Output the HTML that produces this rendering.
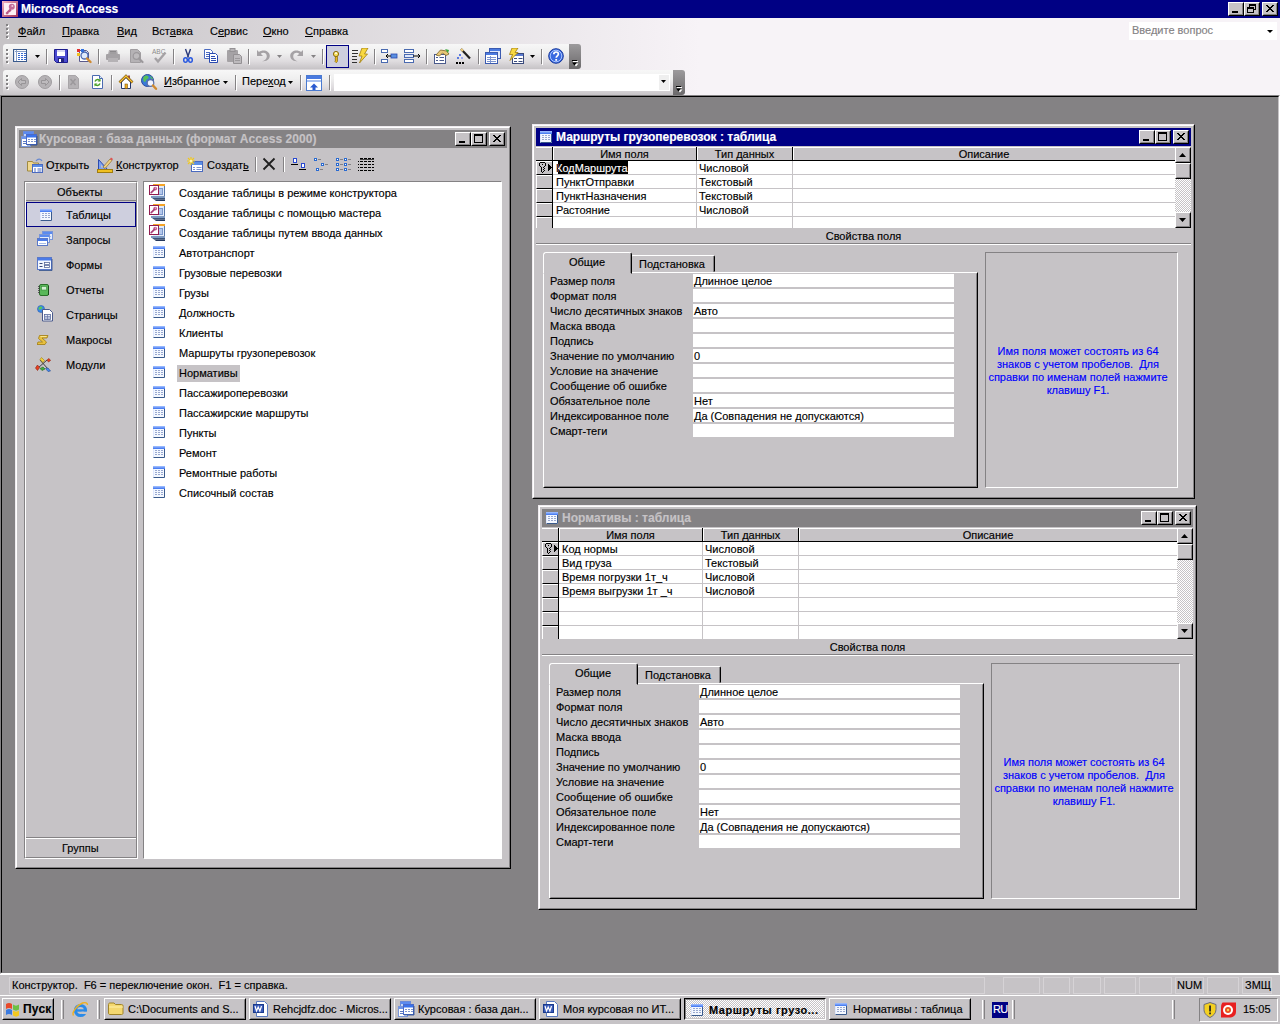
<!DOCTYPE html>
<html lang="ru"><head><meta charset="utf-8"><title>Microsoft Access</title>
<style>
*{box-sizing:border-box;margin:0;padding:0}
html,body{width:1280px;height:1024px;overflow:hidden;background:#848284}
body{position:relative;font-family:"Liberation Sans",sans-serif;font-size:11px;color:#000;line-height:13px;-webkit-font-smoothing:none;-webkit-text-stroke:.15px}
.a{position:absolute}
.t{position:absolute;white-space:nowrap}
u{text-decoration:underline;text-underline-offset:1px}
.win{position:absolute;background:#C6C3C6;border:1px solid;border-color:#EFEBEF #000 #000 #EFEBEF}
.win>.in{position:absolute;left:0;top:0;right:0;bottom:0;border:1px solid;border-color:#fff #848284 #848284 #fff}
.tb{position:absolute;left:3px;top:3px;right:3px;height:18px;color:#fff;font-weight:bold}
.cb{position:absolute;top:2px;width:16px;height:14px;background:#C6C3C6;border:1px solid;border-color:#fff #000 #000 #fff}
.cb:after{content:"";position:absolute;left:0;top:0;right:0;bottom:0;border:1px solid;border-color:#C6C3C6 #848284 #848284 #C6C3C6}
.sunk{border:1px solid;border-color:#848284 #fff #fff #848284}
.btn{position:absolute;background:#C6C3C6;border:1px solid;border-color:#fff #000 #000 #fff}
.btn:after{content:"";position:absolute;left:0;top:0;right:0;bottom:0;border:1px solid;border-color:#C6C3C6 #848284 #848284 #C6C3C6}
.g{font-size:11px}
</style></head>
<body>
<div class="a" style="left:0;top:0;width:1280px;height:18px;background:#000084"></div>
<svg class="a" style="left:2px;top:1px" width="16" height="16" viewBox="0 0 16 16"><defs><linearGradient id="ag" x1="0" y1="0" x2="1" y2="1"><stop offset="0" stop-color="#f4b8c4"/><stop offset="1" stop-color="#a02c54"/></linearGradient></defs><rect x="0" y="0" width="16" height="16" fill="url(#ag)"/><rect x="2" y="2" width="12" height="12" fill="#fcf0f5"/><circle cx="9.800" cy="5.800" r="3" fill="#c46a98"/><circle cx="10.300" cy="5" r="1" fill="#f0c8dc"/><path d="M8 7.500L3.500 12l1.200 1.500l1.600-.6l.4-1.400l1.400-.4l1.500-1.800z" fill="#b85888"/></svg>
<div class="t" id="apptitle" style="left:21px;top:2px;letter-spacing:-.12px;color:#fff;font-weight:bold;font-size:12px;line-height:14px">Microsoft Access</div>
<div class="a" style="left:1228px;top:2px;width:50px;height:14px"><div class="cb" style="left:0;top:0"><svg class="a" style="left:0;top:0" width="14" height="12"><rect x="3" y="8" width="6" height="2" fill="#000"/></svg></div><div class="cb" style="left:16px;top:0"><svg class="a" style="left:0;top:0" width="14" height="12"><rect x="4.5" y="1.5" width="6" height="5" fill="none" stroke="#000"/><rect x="4" y="1" width="7" height="2" fill="#000"/><rect x="2.5" y="4.5" width="6" height="5" fill="#C6C3C6" stroke="#000"/><rect x="2" y="4" width="7" height="2" fill="#000"/></svg></div><div class="cb" style="left:34px;top:0"><svg class="a" style="left:0;top:0" width="14" height="12"><path transform="translate(3 2)" d="M0 0h2v1h1v1h2v-1h1v-1h2v1h-1v1h-1v1h-1v1h1v1h1v1h1v1h-2v-1h-1v-1h-2v1h-1v1h-2v-1h1v-1h1v-1h1v-1h-1v-1h-1v-1h-1z" fill="#000"/></svg></div></div>
<div class="a" style="left:0;top:18px;width:1280px;height:78px;background:linear-gradient(to right,#C6C3C6 0,#C6C3C6 28px,#F7F3F7 700px)"></div>
<div class="a" style="left:7px;top:25px;width:2px;height:2px;background:#fff"></div><div class="a" style="left:6px;top:24px;width:2px;height:2px;background:#848284"></div><div class="a" style="left:7px;top:29px;width:2px;height:2px;background:#fff"></div><div class="a" style="left:6px;top:28px;width:2px;height:2px;background:#848284"></div><div class="a" style="left:7px;top:33px;width:2px;height:2px;background:#fff"></div><div class="a" style="left:6px;top:32px;width:2px;height:2px;background:#848284"></div><div class="a" style="left:7px;top:37px;width:2px;height:2px;background:#fff"></div><div class="a" style="left:6px;top:36px;width:2px;height:2px;background:#848284"></div>
<div class="t" id="m0" style="left:18px;top:25px"><u>Ф</u>айл</div>
<div class="t" id="m1" style="left:62px;top:25px"><u>П</u>равка</div>
<div class="t" id="m2" style="left:117px;top:25px"><u>В</u>ид</div>
<div class="t" id="m3" style="left:152px;top:25px">Вст<u>а</u>вка</div>
<div class="t" id="m4" style="left:210px;top:25px">С<u>е</u>рвис</div>
<div class="t" id="m5" style="left:263px;top:25px"><u>О</u>кно</div>
<div class="t" id="m6" style="left:305px;top:25px"><u>С</u>правка</div>
<div class="a" style="left:1129px;top:22px;width:148px;height:18px;background:#fff"></div>
<div class="t" id="ask" style="left:1132px;top:24px;color:#848284">Введите вопрос</div>
<div class="a" style="left:1267px;top:30px;width:0;height:0;border:3px solid transparent;border-top:3px solid #000;border-bottom:0"></div>
<div class="a" style="left:3px;top:44px;width:568px;height:25px;background:linear-gradient(to bottom,#F7F7F7 0,#EFEFEF 35%,#DEDBDE 70%,#C6C3C6 100%);border-radius:3px 0 0 3px"></div><div class="a" style="left:569px;top:44px;width:12px;height:25px;background:linear-gradient(to bottom,#9C9A9C 0,#848284 50%,#6B696B 100%);border-radius:0 3px 3px 0"></div><svg class="a" style="left:572px;top:60px" width="7" height="7"><path d="M1 1h5M1.500 3.500h5l-2.500 3z" stroke="none" fill="#fff"/><rect x="1" y="1" width="5" height="1" fill="#fff"/><rect x="0" y="0" width="5" height="1" fill="#000"/><path d="M0 2.500h5l-2.500 3z" fill="#000"/></svg><div class="a" style="left:7px;top:50px;width:2px;height:2px;background:#fff"></div><div class="a" style="left:6px;top:49px;width:2px;height:2px;background:#848284"></div><div class="a" style="left:7px;top:54px;width:2px;height:2px;background:#fff"></div><div class="a" style="left:6px;top:53px;width:2px;height:2px;background:#848284"></div><div class="a" style="left:7px;top:58px;width:2px;height:2px;background:#fff"></div><div class="a" style="left:6px;top:57px;width:2px;height:2px;background:#848284"></div><div class="a" style="left:7px;top:62px;width:2px;height:2px;background:#fff"></div><div class="a" style="left:6px;top:61px;width:2px;height:2px;background:#848284"></div>
<div class="a" style="left:13px;top:49px;line-height:0"><svg width="14" height="13" viewBox="0 0 14 13"><rect x="0.500" y="0.500" width="13" height="12" fill="#fff" stroke="#3a5a8c"/><path d="M1 2.500h12M3.500 1v11" stroke="#8aa0c8" fill="none"/><path d="M5 4.500h2M8 4.500h2M11 4.500h2M5 6.500h2M8 6.500h2M11 6.500h2M5 8.500h2M8 8.500h2M11 8.500h2M5 10.500h2M8 10.500h2M11 10.500h2" stroke="#3a6ad0"/><path d="M1.500 1v11" stroke="#dfe6f4"/></svg></div>
<svg class="a" style="left:35px;top:55px" width="5" height="3"><path d="M0 0h5l-2.500 3z" fill="#000"/></svg>
<div class="a" style="left:46px;top:49px;width:1px;height:15px;background:#848284"></div><div class="a" style="left:47px;top:50px;width:1px;height:15px;background:#fff"></div>
<div class="a" style="left:53px;top:48px;line-height:0"><svg width="16" height="16" viewBox="0 0 16 16"><path d="M1.5 1.5h13v13h-11l-2-2z" fill="#4a4ad0" stroke="#1c1c8c"/><rect x="4" y="2" width="8" height="6" fill="#fff"/><rect x="4" y="2" width="8" height="2" fill="#d8d8f4"/><rect x="5" y="10" width="6" height="4" fill="#24247c"/><rect x="6" y="11" width="2" height="3" fill="#fff"/></svg></div>
<div class="a" style="left:76px;top:48px;line-height:0"><svg width="16" height="16" viewBox="0 0 16 16"><path d="M3.5 2.5h7l2 2v9h-9z" fill="#fff" stroke="#5a5a8c"/><rect x="1" y="1" width="3" height="3" fill="#e03030"/><rect x="5" y="1" width="3" height="3" fill="#3070e0"/><rect x="1" y="5" width="3" height="3" fill="#f0c020"/><circle cx="8.5" cy="7.5" r="3.5" fill="#dfeafc" stroke="#4a68b0" stroke-width="1.3"/><path d="M11 10.5l3.5 3.5" stroke="#d08a30" stroke-width="2.4" stroke-linecap="round"/></svg></div>
<div class="a" style="left:98px;top:49px;width:1px;height:15px;background:#848284"></div><div class="a" style="left:99px;top:50px;width:1px;height:15px;background:#fff"></div>
<div class="a" style="left:105px;top:48px;line-height:0"><svg width="16" height="16" viewBox="0 0 16 16"><path d="M4 2h8l1 4h-10z" fill="#b5b2b5"/><rect x="1" y="6" width="14" height="6" rx="1" fill="#a5a2a5"/><rect x="3" y="10" width="10" height="4" fill="#b5b2b5"/><path d="M5 3.5h6M4.500 5h7" stroke="#8c8a8c"/></svg></div>
<div class="a" style="left:128px;top:48px;line-height:0"><svg width="16" height="16" viewBox="0 0 16 16"><path d="M2.5 1.500h7l3 3v10h-10z" fill="#b5b2b5" stroke="#a09da0"/><circle cx="8.5" cy="8" r="3.3" fill="#bdbabd" stroke="#9c999c" stroke-width="1.2"/><path d="M11 10.500l3.500 3.500" stroke="#9c999c" stroke-width="2.2" stroke-linecap="round"/></svg></div>
<div class="a" style="left:151px;top:48px;line-height:0"><svg width="16" height="16" viewBox="0 0 16 16"><text x="1" y="6" font-family="Liberation Sans,sans-serif" font-size="6.5" fill="#8c8a8c">ABC</text><path d="M4 10l3 3.500l7.500 -9" stroke="#a5a2a5" stroke-width="2.4" fill="none"/></svg></div>
<div class="a" style="left:173px;top:49px;width:1px;height:15px;background:#848284"></div><div class="a" style="left:174px;top:50px;width:1px;height:15px;background:#fff"></div>
<div class="a" style="left:180px;top:48px;line-height:0"><svg width="16" height="16" viewBox="0 0 16 16"><path d="M5.500 1l3 8.500M10.500 1l-3 8.500" stroke="#2a3a7c" stroke-width="1.400" fill="none"/><ellipse cx="5.500" cy="12" rx="1.800" ry="2.300" fill="none" stroke="#2a5ae0" stroke-width="1.500"/><ellipse cx="10.500" cy="12" rx="1.800" ry="2.300" fill="none" stroke="#2a5ae0" stroke-width="1.500"/></svg></div>
<div class="a" style="left:203px;top:48px;line-height:0"><svg width="16" height="16" viewBox="0 0 16 16"><path d="M1.500 1.500h6l2 2v7h-8z" fill="#fff" stroke="#4a6ac0"/><path d="M3 4.500h4M3 6.500h5M3 8.500h5" stroke="#4a6ac0"/><path d="M6.500 5.500h6l2 2v7h-8z" fill="#fff" stroke="#2a4ab0"/><path d="M8 8.500h4M8 10.500h5M8 12.500h5" stroke="#2a4ab0"/></svg></div>
<div class="a" style="left:226px;top:48px;line-height:0"><svg width="16" height="16" viewBox="0 0 16 16"><rect x="1" y="2" width="11" height="12" rx="1" fill="#a5a2a5"/><rect x="4" y="0.500" width="5" height="3" fill="#b5b2b5" stroke="#949194"/><path d="M7.500 6.500h6l2 2v7h-8z" fill="#bdbabd" stroke="#949194"/><path d="M9 10.500h5M9 12.500h5" stroke="#9c999c"/></svg></div>
<div class="a" style="left:248px;top:49px;width:1px;height:15px;background:#848284"></div><div class="a" style="left:249px;top:50px;width:1px;height:15px;background:#fff"></div>
<div class="a" style="left:256px;top:48px;line-height:0"><svg width="14" height="16" viewBox="0 0 14 16"><path d="M1 2v6h6l-2.200-2.200c2-1.800 6-1 6 2.500c0 3-2.500 4.500-5 5.200c4.500 0 8-2 8-5.700c0-5-7-7-10.800-3.800z" fill="#a5a2a5"/></svg></div>
<svg class="a" style="left:277px;top:55px" width="5" height="3"><path d="M0 0h5l-2.500 3z" fill="#848284"/></svg>
<div class="a" style="left:290px;top:48px;line-height:0"><svg width="14" height="16" viewBox="0 0 14 16"><path d="M13 2v6h-6l2.200-2.200c-2-1.800-6-1-6 2.500c0 3 2.500 4.500 5 5.200c-4.500 0-8-2-8-5.700c0-5 7-7 10.800-3.800z" fill="#a5a2a5"/></svg></div>
<svg class="a" style="left:311px;top:55px" width="5" height="3"><path d="M0 0h5l-2.500 3z" fill="#848284"/></svg>
<div class="a" style="left:322px;top:49px;width:1px;height:15px;background:#848284"></div><div class="a" style="left:323px;top:50px;width:1px;height:15px;background:#fff"></div>
<div class="a" style="left:326px;top:45px;width:23px;height:23px;background:#CECFDE;border:1px solid #000084"></div>
<div class="a" style="left:329px;top:49px;line-height:0"><svg width="16" height="16" viewBox="0 0 16 16"><circle cx="7" cy="5" r="2.600" fill="#f8e060" stroke="#8c6c10" stroke-width="1"/><circle cx="7" cy="4.200" r=".9" fill="#fff"/><path d="M6 7.500h2.400v5l-1.200 1.200l-1.200-1.200v-.8l.9-.7l-.9-.7v-.8l.9-.7l-.9-.7z" fill="#f0c020" stroke="#8c6c10" stroke-width=".8"/></svg></div>
<div class="a" style="left:352px;top:48px;line-height:0"><svg width="17" height="16" viewBox="0 0 17 16"><path d="M0 2.500h6M0 5.500h6M0 8.500h5M0 11.500h5M0 14.500h5" stroke="#303030"/><path d="M10 0h6l-3.500 6h3l-8 9l2.500 -7h-3z" fill="#f8d840" stroke="#a07c10" stroke-width=".8"/></svg></div>
<div class="a" style="left:374px;top:49px;width:1px;height:15px;background:#848284"></div><div class="a" style="left:375px;top:50px;width:1px;height:15px;background:#fff"></div>
<div class="a" style="left:381px;top:48px;line-height:0"><svg width="17" height="16" viewBox="0 0 17 16"><rect x="0.500" y="1.500" width="6" height="3" fill="#fff" stroke="#4a6ab0"/><rect x="0.500" y="11.500" width="6" height="3" fill="#fff" stroke="#4a6ab0"/><rect x="10" y="6" width="6" height="4" fill="#5b8fe0" stroke="#2a4ab0" stroke-width=".8"/><path d="M10 8h-5M7 6l-2 2l2 2" stroke="#000" fill="none"/></svg></div>
<div class="a" style="left:404px;top:48px;line-height:0"><svg width="17" height="16" viewBox="0 0 17 16"><rect x="0.500" y="1.500" width="9" height="3" fill="#fff" stroke="#4a6ab0"/><rect x="0.500" y="11.500" width="9" height="3" fill="#fff" stroke="#4a6ab0"/><rect x="0.500" y="6.500" width="9" height="3" fill="#dfe8fc" stroke="#4a6ab0"/><path d="M9 8h7M14 6l2 2l-2 2" stroke="#000" fill="none"/></svg></div>
<div class="a" style="left:426px;top:49px;width:1px;height:15px;background:#848284"></div><div class="a" style="left:427px;top:50px;width:1px;height:15px;background:#fff"></div>
<div class="a" style="left:433px;top:48px;line-height:0"><svg width="17" height="17" viewBox="0 0 17 17"><rect x="1.500" y="6.500" width="11" height="9" fill="#fff" stroke="#4a5a8c"/><path d="M3 9.500h2M6.500 9.500h4.500M3 12.500h2M6.500 12.500h4.500" stroke="#4a5a8c"/><path d="M3 7l4.500-5l6 1l2.500 3l-3 1.500l-3.500-2.500l-3 3z" fill="#e8c878" stroke="#7c6424" stroke-width=".8"/><path d="M12 1l4 1l-1 3z" fill="#38a838"/></svg></div>
<div class="a" style="left:456px;top:48px;line-height:0"><svg width="16" height="16" viewBox="0 0 16 16"><path d="M5 1l9 9.500" stroke="#202020" stroke-width="2.200"/><path d="M5 1l2 2" stroke="#f0d080" stroke-width="2.200"/><rect x="3" y="6" width="2" height="2" fill="#5a7ae0"/><rect x="1" y="9" width="2" height="2" fill="#5a7ae0"/><rect x="5" y="9" width="2" height="2" fill="#9caaf0"/><rect x="0" y="14" width="2" height="2" fill="#000"/><rect x="3" y="14" width="2" height="2" fill="#000"/><rect x="6" y="14" width="2" height="2" fill="#000"/></svg></div>
<div class="a" style="left:478px;top:49px;width:1px;height:15px;background:#848284"></div><div class="a" style="left:479px;top:50px;width:1px;height:15px;background:#fff"></div>
<div class="a" style="left:485px;top:48px;line-height:0"><svg width="16" height="16" viewBox="0 0 16 16"><rect x="4.500" y="0.500" width="11" height="10" fill="#dfe8fc" stroke="#3a5ab0"/><rect x="5" y="1" width="10" height="2" fill="#4a7ae0"/><rect x="0.500" y="4.500" width="12" height="11" fill="#fff" stroke="#3a5ab0"/><rect x="1" y="5" width="11" height="2" fill="#4a7ae0"/><path d="M2 9.500h9M2 11.500h9M2 13.500h9M5.500 8v7" stroke="#7c94d0"/></svg></div>
<div class="a" style="left:507px;top:48px;line-height:0"><svg width="17" height="16" viewBox="0 0 17 16"><rect x="5.500" y="5.500" width="11" height="10" fill="#fff" stroke="#3a4a7c"/><rect x="6" y="6" width="10" height="2" fill="#5a7ad0"/><path d="M7 10.500h3M11.500 10.500h4M7 13.500h3M11.500 13.500h4" stroke="#3a4a7c"/><path d="M5 0h6l-3 4.500h3l-8 8l2.500-6h-3z" fill="#f8d840" stroke="#a07c10" stroke-width=".8"/></svg></div>
<svg class="a" style="left:530px;top:55px" width="5" height="3"><path d="M0 0h5l-2.500 3z" fill="#000"/></svg>
<div class="a" style="left:541px;top:49px;width:1px;height:15px;background:#848284"></div><div class="a" style="left:542px;top:50px;width:1px;height:15px;background:#fff"></div>
<div class="a" style="left:548px;top:48px;line-height:0"><svg width="16" height="16" viewBox="0 0 16 16"><circle cx="8" cy="8" r="7.300" fill="#3a6ae0" stroke="#1a3a9c" stroke-width="1"/><circle cx="8" cy="8" r="5.800" fill="none" stroke="#a8c4ff" stroke-width="1"/><path d="M5.800 6.300c0-3 4.600-3 4.600-.3c0 1.800-2.200 1.800-2.200 3.800" stroke="#fff" stroke-width="1.700" fill="none"/><rect x="7.300" y="11" width="1.800" height="1.800" fill="#fff"/></svg></div>
<div class="a" style="left:3px;top:70px;width:672px;height:25px;background:linear-gradient(to bottom,#F7F7F7 0,#EFEFEF 35%,#DEDBDE 70%,#C6C3C6 100%);border-radius:3px 0 0 3px"></div><div class="a" style="left:673px;top:70px;width:12px;height:25px;background:linear-gradient(to bottom,#9C9A9C 0,#848284 50%,#6B696B 100%);border-radius:0 3px 3px 0"></div><svg class="a" style="left:676px;top:86px" width="7" height="7"><path d="M1 1h5M1.500 3.500h5l-2.500 3z" stroke="none" fill="#fff"/><rect x="1" y="1" width="5" height="1" fill="#fff"/><rect x="0" y="0" width="5" height="1" fill="#000"/><path d="M0 2.500h5l-2.500 3z" fill="#000"/></svg><div class="a" style="left:7px;top:76px;width:2px;height:2px;background:#fff"></div><div class="a" style="left:6px;top:75px;width:2px;height:2px;background:#848284"></div><div class="a" style="left:7px;top:80px;width:2px;height:2px;background:#fff"></div><div class="a" style="left:6px;top:79px;width:2px;height:2px;background:#848284"></div><div class="a" style="left:7px;top:84px;width:2px;height:2px;background:#fff"></div><div class="a" style="left:6px;top:83px;width:2px;height:2px;background:#848284"></div><div class="a" style="left:7px;top:88px;width:2px;height:2px;background:#fff"></div><div class="a" style="left:6px;top:87px;width:2px;height:2px;background:#848284"></div>
<div class="a" style="left:14px;top:74px;line-height:0"><svg width="16" height="16" viewBox="0 0 16 16"><circle cx="8" cy="8" r="6.500" fill="#b5b2b5" stroke="#a09da0"/><path d="M4 8l3.500-3.500v2h4v3h-4v2z" fill="#bdbabd" stroke="#949194" stroke-width=".9"/></svg></div>
<div class="a" style="left:37px;top:74px;line-height:0"><svg width="16" height="16" viewBox="0 0 16 16"><circle cx="8" cy="8" r="6.500" fill="#b5b2b5" stroke="#a09da0"/><path d="M12 8l-3.500-3.500v2h-4v3h4v2z" fill="#bdbabd" stroke="#949194" stroke-width=".9"/></svg></div>
<div class="a" style="left:59px;top:75px;width:1px;height:15px;background:#848284"></div><div class="a" style="left:60px;top:76px;width:1px;height:15px;background:#fff"></div>
<div class="a" style="left:68px;top:74px;line-height:0"><svg width="12" height="16" viewBox="0 0 12 16"><path d="M0.500 1.500h7l3 3v10h-10z" fill="#b5b2b5" stroke="#a8a5a8"/><path d="M2.500 5l5 6M7.500 5l-5 6" stroke="#9c999c" stroke-width="1.500"/></svg></div>
<div class="a" style="left:91px;top:74px;line-height:0"><svg width="13" height="16" viewBox="0 0 13 16"><path d="M1.500 1.500h7l3 3v10h-10z" fill="#fff" stroke="#4a6ab0"/><path d="M8.500 1.500v3h3" fill="#dfe8fc" stroke="#4a6ab0"/><path d="M4 7.500c1-2.500 4-2.500 5 -.5M9 9.500c-1 2.500-4 2.500-5 .5" stroke="#4aa02a" stroke-width="1.500" fill="none"/><path d="M9.500 4.500v3h-3zM3.500 12.500v-3h3z" fill="#4aa02a"/></svg></div>
<div class="a" style="left:111px;top:75px;width:1px;height:15px;background:#848284"></div><div class="a" style="left:112px;top:76px;width:1px;height:15px;background:#fff"></div>
<div class="a" style="left:118px;top:74px;line-height:0"><svg width="16" height="16" viewBox="0 0 16 16"><path d="M11 1.500v4" stroke="#902828" stroke-width="1.600"/><path d="M3.500 8v6.500h9v-6.500l-4.500-4.500z" fill="#fff" stroke="#24386c"/><path d="M1.500 8.500l6.500-6.500l6.500 6.500" fill="none" stroke="#6a4a10" stroke-width="2.600"/><path d="M1.500 8.500l6.500-6.500l6.500 6.500" fill="none" stroke="#f8c030" stroke-width="1.400"/><rect x="7" y="10" width="2.500" height="4.500" fill="#f0b020" stroke="#805810" stroke-width=".6"/></svg></div>
<div class="a" style="left:141px;top:74px;line-height:0"><svg width="17" height="17" viewBox="0 0 17 17"><circle cx="6.500" cy="6.500" r="6" fill="#3a7ad8" stroke="#2a4a9c"/><path d="M3 2.500c1.500-1.500 4-1 4.500.5c.5 1.500-1 1.500-2 2.500s-.5 2.500-2 2.500c-1.500-1-2-4-.5-5.500zM9 2c1.500.5 2.500 1.500 3 3c-1 .5-2.500-.5-3-3z" fill="#58c058"/><circle cx="9.500" cy="9" r="3.300" fill="#f0f4ff" stroke="#5a70a8" stroke-width="1.200"/><path d="M12 11.500l3 3.300" stroke="#d08a30" stroke-width="2.400" stroke-linecap="round"/></svg></div>
<div class="t" id="fav" style="left:164px;top:75px"><u>И</u>збранное</div>
<svg class="a" style="left:223px;top:81px" width="5" height="3"><path d="M0 0h5l-2.500 3z" fill="#000"/></svg>
<div class="a" style="left:235px;top:75px;width:1px;height:15px;background:#848284"></div><div class="a" style="left:236px;top:76px;width:1px;height:15px;background:#fff"></div>
<div class="t" id="go" style="left:242px;top:75px">Пере<u>х</u>од</div>
<svg class="a" style="left:288px;top:81px" width="5" height="3"><path d="M0 0h5l-2.500 3z" fill="#000"/></svg>
<div class="a" style="left:300px;top:75px;width:1px;height:15px;background:#848284"></div><div class="a" style="left:301px;top:76px;width:1px;height:15px;background:#fff"></div>
<div class="a" style="left:306px;top:75px;line-height:0"><svg width="16" height="16" viewBox="0 0 16 16"><rect x="0.500" y="0.500" width="15" height="15" fill="#fff" stroke="#4a7ad0"/><rect x="1" y="1" width="14" height="3" fill="#4a7ae0"/><rect x="1" y="5" width="14" height="2" fill="#a8c0f0"/><path d="M8 8.500l4 4h-2.500v2.500h-3v-2.500h-2.500z" fill="#2a5ad0"/></svg></div>
<div class="a" style="left:329px;top:75px;width:1px;height:15px;background:#848284"></div><div class="a" style="left:330px;top:76px;width:1px;height:15px;background:#fff"></div>
<div class="a" style="left:334px;top:74px;width:336px;height:17px;background:#fff"></div>
<div class="a" style="left:659px;top:75px;width:10px;height:15px;background:#EFEFEF"></div>
<svg class="a" style="left:661px;top:80px" width="5" height="3"><path d="M0 0h5l-2.500 3z" fill="#000"/></svg>
<div class="a" style="left:0;top:95px;width:1280px;height:879px;background:#848284;border:1px solid;border-color:#848284 #fff #fff #848284"><div class="a" style="left:0;top:0;right:0;bottom:0;border:1px solid;border-color:#000 #C6C3C6 #848284 #000"></div></div>
<div class="win" style="left:15px;top:126px;width:496px;height:743px"><div class="in"></div><div class="tb" style="background:#848284;color:#C6C3C6"><div class="a" style="left:2px;top:1px;line-height:0"><svg width="17" height="17" viewBox="0 0 17 17"><rect x="2.500" y="0.500" width="10" height="8" fill="#c4d4f4" stroke="#6a8ad8"/><rect x="3" y="1" width="9" height="2" fill="#5a8af0"/><rect x="0.500" y="5.500" width="9" height="10" fill="#fff" stroke="#7a96d8"/><rect x="1" y="6" width="8" height="2" fill="#6a94ec"/><path d="M2 10.500h3M2 12.500h3" stroke="#5a78c0"/><rect x="5.500" y="3.500" width="10" height="10" fill="#fff" stroke="#4a6ac8"/><rect x="6" y="4" width="9" height="2.500" fill="#3a72ec"/><path d="M7 8.500h2M10 8.500h2M13 8.500h2M7 10.500h2M10 10.500h2M13 10.500h2" stroke="#7c94d0"/><path d="M16 5v9h-10" stroke="#2a4a8c" fill="none" stroke-width=".8"/></svg></div><div class="t" id="w1t" style="left:20px;top:2px;font-size:12px;line-height:14px;letter-spacing:.05px">Курсовая : база данных (формат Access 2000)</div><div class="cb" style="right:36px"><svg class="a" style="left:0;top:0" width="14" height="12"><rect x="3" y="8" width="6" height="2" fill="#000"/></svg></div><div class="cb" style="right:20px"><svg class="a" style="left:0;top:0" width="14" height="12"><rect x="2.5" y="1.5" width="8" height="8" fill="none" stroke="#000"/><rect x="2" y="1" width="9" height="2" fill="#000"/></svg></div><div class="cb" style="right:2px"><svg class="a" style="left:0;top:0" width="14" height="12"><path transform="translate(3 2)" d="M0 0h2v1h1v1h2v-1h1v-1h2v1h-1v1h-1v1h-1v1h1v1h1v1h1v1h-2v-1h-1v-1h-2v1h-1v1h-2v-1h1v-1h1v-1h1v-1h-1v-1h-1v-1h-1z" fill="#000"/></svg></div></div><div class="a" style="left:11px;top:30px;line-height:0"><svg width="16" height="16" viewBox="0 0 16 16"><path d="M0.500 4.500h5l1 1.500h5v8h-11z" fill="#f0d890" stroke="#a08a40"/><rect x="5.500" y="7.500" width="10" height="8" fill="#fff" stroke="#4a6ac0"/><rect x="6" y="8" width="9" height="2" fill="#5b8fe8"/><path d="M7 12h2M10.500 12h4M7 14h2M10.500 14h4" stroke="#4a6ac0"/><path d="M9 4c2-3 5-2 6 0" stroke="#6a8ad0" fill="none" stroke-width="1.200"/></svg></div><div class="t" id="w1a" style="left:30px;top:32px;">О<u>т</u>крыть</div><div class="a" style="left:81px;top:30px;line-height:0"><svg width="17" height="16" viewBox="0 0 17 16"><path d="M1.500 12.500v-10l9 10z" fill="#7ca0f0" stroke="#2a4ab0"/><path d="M4 10.500v-3l2.500 3z" fill="#C6C3C6"/><rect x="0.500" y="12.500" width="15" height="3" fill="#f0c020" stroke="#a07c10"/><path d="M6 10l7-8l2 1.500l-7 8z" fill="#f0d080" stroke="#806020" stroke-width=".6"/><path d="M13 2l1-1.500l2 1.500l-1 1.500z" fill="#e05050"/></svg></div><div class="t" id="w1b" style="left:100px;top:32px;"><u>К</u>онструктор</div><div class="a" style="left:171px;top:30px;line-height:0"><svg width="16" height="16" viewBox="0 0 16 16"><rect x="4.500" y="4.500" width="11" height="10" fill="#fff" stroke="#4a6ac0"/><rect x="5" y="5" width="10" height="3" fill="#5b8fe8"/><path d="M6 10.500h2M9.500 10.500h5M6 12.500h2M9.500 12.500h5" stroke="#7c94d0"/><path d="M4 0v8M0 4h8M1 1l6 6M7 1l-6 6" stroke="#f0c820" stroke-width="1.200"/><circle cx="4" cy="4" r="1.500" fill="#fff8c0"/></svg></div><div class="t" id="w1c" style="left:191px;top:32px;">Создат<u>ь</u></div><div class="a" style="left:239px;top:30px;width:1px;height:15px;background:#848284"></div><div class="a" style="left:240px;top:30px;width:1px;height:15px;background:#fff"></div><div class="a" style="left:246px;top:30px;line-height:0"><svg width="14" height="14"><path d="M1.500 1.500l11 11M12.500 1.500l-11 11" stroke="#202020" stroke-width="1.800"/></svg></div><div class="a" style="left:267px;top:30px;width:1px;height:15px;background:#848284"></div><div class="a" style="left:268px;top:30px;width:1px;height:15px;background:#fff"></div><div class="a" style="left:275px;top:31px;line-height:0"><svg width="15" height="13"><rect x="2.500" y="0.500" width="3" height="4" fill="#fff" stroke="#2a4ad0"/><path d="M0 6.500h7M8 11.500h7" stroke="#000"/><rect x="10.500" y="5.500" width="3" height="4" fill="#fff" stroke="#2a4ad0"/></svg></div><div class="a" style="left:298px;top:31px;line-height:0"><svg width="15" height="13"><rect x="0.500" y="0.500" width="2" height="2" fill="#fff" stroke="#2a6ad0"/><path d="M4 1.500h3M11 6.500h3M6 11.500h3" stroke="#848284"/><rect x="7.500" y="5.500" width="2" height="2" fill="#fff" stroke="#2a6ad0"/><rect x="2.500" y="10.500" width="2" height="2" fill="#fff" stroke="#2a6ad0"/></svg></div><div class="a" style="left:320px;top:31px;line-height:0"><svg width="16" height="13"><g fill="#fff" stroke="#2a6ad0"><rect x="0.500" y="0.500" width="2" height="2"/><rect x="0.500" y="5.500" width="2" height="2"/><rect x="0.500" y="10.500" width="2" height="2"/><rect x="8.500" y="0.500" width="2" height="2"/><rect x="8.500" y="5.500" width="2" height="2"/><rect x="8.500" y="10.500" width="2" height="2"/></g><path d="M4 1.500h3M4 6.500h3M4 11.500h3M12 1.500h3M12 6.500h3M12 11.500h3" stroke="#848284"/></svg></div><div class="a" style="left:342px;top:30px;line-height:0"><svg width="17" height="15"><path d="M2 1.500h14M2 4.500h14M2 7.500h14M2 10.500h14M2 13.500h14" stroke="#000" stroke-dasharray="3 1"/><path d="M0 4.500h1M0 7.500h1M0 10.500h1M0 13.500h1" stroke="#000"/><path d="M2 2.500h14" stroke="#404040"/></svg></div><div class="a" style="left:8px;top:54px;width:114px;height:678px;border:1px solid;border-color:#848284 #fff #fff #848284"></div><div class="a" style="left:9px;top:55px;width:112px;height:676px;border:1px solid;border-color:#fff #848284 #848284 #fff"></div><div class="a" style="left:10px;top:56px;width:110px;height:18px;border-bottom:1px solid #848284"></div><div class="t" id="w1obj" style="left:41px;top:59px;">Объекты</div><div class="a" style="left:10px;top:75px;width:110px;height:25px;background:#CECFDE;border:1px solid #000084"></div><div class="a" style="left:24px;top:82px;line-height:0"><svg width="12" height="12" viewBox="0 0 12 12"><defs><linearGradient id="tg" x1="0" y1="0" x2="0" y2="1"><stop offset="0" stop-color="#a8c4ff"/><stop offset="1" stop-color="#3a72f0"/></linearGradient></defs><rect x="0" y="0" width="12" height="12" fill="#f4f8ff"/><rect x="0" y="0" width="12" height="3" fill="url(#tg)"/><path d="M2 4.500h2M5 4.500h2M8 4.500h2M2 6.500h2M5 6.500h2M8 6.500h2M2 8.500h2M5 8.500h2M8 8.500h2" stroke="#98a8d0"/><path d="M11.500 3v8.500h-11" stroke="#3a5a8c" fill="none"/><path d="M0.500 3v8" stroke="#dfe8ff"/></svg></div><div class="t" id="w1l0" style="left:50px;top:82px;">Таблицы</div><div class="a" style="left:21px;top:104px;line-height:0"><svg width="16" height="16" viewBox="0 0 16 16"><rect x="5.500" y="0.500" width="10" height="8" fill="#e4ecfc" stroke="#7a96d8"/><rect x="6" y="1" width="9" height="2" fill="#5a8af0"/><path d="M7 5.500h7" stroke="#a8bce8"/><rect x="2.500" y="3.500" width="10" height="8" fill="#e4ecfc" stroke="#7a96d8"/><rect x="3" y="4" width="9" height="2" fill="#5a8af0"/><rect x="0.500" y="7.500" width="10" height="7" fill="#fff" stroke="#5a78c8"/><rect x="1" y="8" width="9" height="2" fill="#4a7ae8"/><path d="M2 12.500h7" stroke="#a8bce8"/></svg></div><div class="t" id="w1l1" style="left:50px;top:107px;">Запросы</div><div class="a" style="left:21px;top:130px;line-height:0"><svg width="16" height="14" viewBox="0 0 16 14"><rect x="0.500" y="0.500" width="14" height="12" fill="#f4f8ff" stroke="#5a78c8"/><rect x="1" y="1" width="13" height="2.500" fill="#4a7ae8"/><path d="M2.500 6.500h3M2.500 9.500h3" stroke="#3a4a7c"/><rect x="7.500" y="5.500" width="5" height="2" fill="#fff" stroke="#5a6a9c" stroke-width=".8"/><rect x="7.500" y="8.500" width="5" height="2" fill="#fff" stroke="#5a6a9c" stroke-width=".8"/><path d="M15 2v11.500h-13" stroke="#2a4a8c" fill="none" stroke-width=".8"/></svg></div><div class="t" id="w1l2" style="left:50px;top:132px;">Формы</div><div class="a" style="left:21px;top:157px;line-height:0"><svg width="13" height="12" viewBox="0 0 13 12"><rect x="2.500" y="0.500" width="9" height="11" rx="1.500" fill="#5ab85a" stroke="#2a702a"/><rect x="4.500" y="2.500" width="5" height="3.500" fill="#d4f0d4" stroke="#3a8a3a" stroke-width=".6"/><path d="M1 2.500h2M1 4.500h2M1 6.500h2M1 8.500h2" stroke="#404040" stroke-width=".8"/><path d="M11.500 2v9" stroke="#1a501a"/></svg></div><div class="t" id="w1l3" style="left:50px;top:157px;">Отчеты</div><div class="a" style="left:21px;top:178px;line-height:0"><svg width="16" height="17" viewBox="0 0 16 17"><circle cx="4" cy="4" r="3.500" fill="#3a8ae8" stroke="#2a5ab0" stroke-width=".6"/><path d="M1.500 3c1-2 3-2 4-.5c0 1.500-2 1-2.500 2.500c-1 0-1.500-1-1.500-2z" fill="#5ac85a"/><path d="M5.500 4.500h7l3 3v8.500h-10z" fill="#fff" stroke="#4a5a8c"/><rect x="7.500" y="9.500" width="6" height="5" fill="#dfe6f4" stroke="#5a6a9c" stroke-width=".8"/><path d="M8 11.500h5M8 13h5M10.500 10v4.500" stroke="#5a6a9c" stroke-width=".6"/></svg></div><div class="t" id="w1l4" style="left:50px;top:182px;">Страницы</div><div class="a" style="left:21px;top:207px;line-height:0"><svg width="12" height="12" viewBox="0 0 12 12"><path d="M2.500 1.500h8.500l-1 2.500h-5l4.500 4l-1.500 2.500h-8l1-2.500h4.500l-4-3.500z" fill="#e8c040" stroke="#a07c10" stroke-width=".8"/><path d="M3.500 2.500h6" stroke="#fff0a0" stroke-width=".8"/></svg></div><div class="t" id="w1l5" style="left:50px;top:207px;">Макросы</div><div class="a" style="left:19px;top:230px;line-height:0"><svg width="16" height="15" viewBox="0 0 16 15"><path d="M3 11l9-8M5 3l8 9" stroke="#404040" stroke-width="1"/><path d="M6.500 0.500l3 3l-1.500 2l-3-3z" fill="#f0d040" stroke="#a08010" stroke-width=".6"/><path d="M0.500 11l2-3l2 2.500l-2 3z" fill="#e84020" stroke="#902010" stroke-width=".6"/><path d="M5 11.500l3-1.500l2 2l-3 1.500z" fill="#40b040" stroke="#206020" stroke-width=".6"/><path d="M10.500 11.500l2.500-.5l2.500 3l-2.500.5z" fill="#4a8af0" stroke="#204a90" stroke-width=".6"/><path d="M12 3l2-1.500l1.500 2l-2 1.500z" fill="#e84020" stroke="#902010" stroke-width=".6"/></svg></div><div class="t" id="w1l6" style="left:50px;top:232px;">Модули</div><div class="a" style="left:10px;top:710px;width:110px;height:1px;background:#848284"></div><div class="a" style="left:10px;top:711px;width:110px;height:1px;background:#fff"></div><div class="t" id="w1grp" style="left:46px;top:715px;">Группы</div><div class="a" style="left:127px;top:54px;width:359px;height:678px;background:#fff;border:1px solid;border-color:#848284 #fff #fff #848284"></div><div class="a" style="left:133px;top:57px;line-height:0"><svg width="17" height="17" viewBox="0 0 17 17"><rect x="4" y="0" width="12" height="13" fill="#e4ecf8"/><rect x="4" y="0" width="12" height="2" fill="#f4a428"/><rect x="8.500" y="4.500" width="5" height="6" fill="#b4c8ec" stroke="#7c98cc"/><path d="M15.500 2v11" stroke="#5a78a8"/><path d="M2 12h14v2h-14z" fill="#7c98c0"/><path d="M3 14h13v1.500h-11z" fill="#3a5478"/><path d="M5 15.500h11v1.500h-9z" fill="#24385c"/><rect x="0.500" y="1.500" width="9" height="9" fill="#fff" stroke="#901c50"/><circle cx="6.200" cy="4.600" r="1.900" fill="#c05a90"/><path d="M5.200 5.600l-3 3" stroke="#a83c78" stroke-width="1.700" stroke-linecap="round"/><circle cx="6.600" cy="4.100" r=".6" fill="#f4c8dc"/></svg></div><div class="t" id="w1i0" style="left:163px;top:60px;">Создание таблицы в режиме конструктора</div><div class="a" style="left:133px;top:77px;line-height:0"><svg width="17" height="17" viewBox="0 0 17 17"><rect x="4" y="0" width="12" height="13" fill="#e4ecf8"/><rect x="4" y="0" width="12" height="2" fill="#f4a428"/><rect x="8.500" y="4.500" width="5" height="6" fill="#b4c8ec" stroke="#7c98cc"/><path d="M15.500 2v11" stroke="#5a78a8"/><path d="M2 12h14v2h-14z" fill="#7c98c0"/><path d="M3 14h13v1.500h-11z" fill="#3a5478"/><path d="M5 15.500h11v1.500h-9z" fill="#24385c"/><rect x="0.500" y="1.500" width="9" height="9" fill="#fff" stroke="#901c50"/><circle cx="6.200" cy="4.600" r="1.900" fill="#c05a90"/><path d="M5.200 5.600l-3 3" stroke="#a83c78" stroke-width="1.700" stroke-linecap="round"/><circle cx="6.600" cy="4.100" r=".6" fill="#f4c8dc"/></svg></div><div class="t" id="w1i1" style="left:163px;top:80px;">Создание таблицы с помощью мастера</div><div class="a" style="left:133px;top:97px;line-height:0"><svg width="17" height="17" viewBox="0 0 17 17"><rect x="4" y="0" width="12" height="13" fill="#e4ecf8"/><rect x="4" y="0" width="12" height="2" fill="#f4a428"/><rect x="8.500" y="4.500" width="5" height="6" fill="#b4c8ec" stroke="#7c98cc"/><path d="M15.500 2v11" stroke="#5a78a8"/><path d="M2 12h14v2h-14z" fill="#7c98c0"/><path d="M3 14h13v1.500h-11z" fill="#3a5478"/><path d="M5 15.500h11v1.500h-9z" fill="#24385c"/><rect x="0.500" y="1.500" width="9" height="9" fill="#fff" stroke="#901c50"/><circle cx="6.200" cy="4.600" r="1.900" fill="#c05a90"/><path d="M5.200 5.600l-3 3" stroke="#a83c78" stroke-width="1.700" stroke-linecap="round"/><circle cx="6.600" cy="4.100" r=".6" fill="#f4c8dc"/></svg></div><div class="t" id="w1i2" style="left:163px;top:100px;">Создание таблицы путем ввода данных</div><div class="a" style="left:137px;top:119px;line-height:0"><svg width="12" height="12" viewBox="0 0 12 12"><defs><linearGradient id="tg" x1="0" y1="0" x2="0" y2="1"><stop offset="0" stop-color="#a8c4ff"/><stop offset="1" stop-color="#3a72f0"/></linearGradient></defs><rect x="0" y="0" width="12" height="12" fill="#f4f8ff"/><rect x="0" y="0" width="12" height="3" fill="url(#tg)"/><path d="M2 4.500h2M5 4.500h2M8 4.500h2M2 6.500h2M5 6.500h2M8 6.500h2M2 8.500h2M5 8.500h2M8 8.500h2" stroke="#98a8d0"/><path d="M11.500 3v8.500h-11" stroke="#3a5a8c" fill="none"/><path d="M0.500 3v8" stroke="#dfe8ff"/></svg></div><div class="t" id="w1i3" style="left:163px;top:120px;">Автотранспорт</div><div class="a" style="left:137px;top:139px;line-height:0"><svg width="12" height="12" viewBox="0 0 12 12"><defs><linearGradient id="tg" x1="0" y1="0" x2="0" y2="1"><stop offset="0" stop-color="#a8c4ff"/><stop offset="1" stop-color="#3a72f0"/></linearGradient></defs><rect x="0" y="0" width="12" height="12" fill="#f4f8ff"/><rect x="0" y="0" width="12" height="3" fill="url(#tg)"/><path d="M2 4.500h2M5 4.500h2M8 4.500h2M2 6.500h2M5 6.500h2M8 6.500h2M2 8.500h2M5 8.500h2M8 8.500h2" stroke="#98a8d0"/><path d="M11.500 3v8.500h-11" stroke="#3a5a8c" fill="none"/><path d="M0.500 3v8" stroke="#dfe8ff"/></svg></div><div class="t" id="w1i4" style="left:163px;top:140px;">Грузовые перевозки</div><div class="a" style="left:137px;top:159px;line-height:0"><svg width="12" height="12" viewBox="0 0 12 12"><defs><linearGradient id="tg" x1="0" y1="0" x2="0" y2="1"><stop offset="0" stop-color="#a8c4ff"/><stop offset="1" stop-color="#3a72f0"/></linearGradient></defs><rect x="0" y="0" width="12" height="12" fill="#f4f8ff"/><rect x="0" y="0" width="12" height="3" fill="url(#tg)"/><path d="M2 4.500h2M5 4.500h2M8 4.500h2M2 6.500h2M5 6.500h2M8 6.500h2M2 8.500h2M5 8.500h2M8 8.500h2" stroke="#98a8d0"/><path d="M11.500 3v8.500h-11" stroke="#3a5a8c" fill="none"/><path d="M0.500 3v8" stroke="#dfe8ff"/></svg></div><div class="t" id="w1i5" style="left:163px;top:160px;">Грузы</div><div class="a" style="left:137px;top:179px;line-height:0"><svg width="12" height="12" viewBox="0 0 12 12"><defs><linearGradient id="tg" x1="0" y1="0" x2="0" y2="1"><stop offset="0" stop-color="#a8c4ff"/><stop offset="1" stop-color="#3a72f0"/></linearGradient></defs><rect x="0" y="0" width="12" height="12" fill="#f4f8ff"/><rect x="0" y="0" width="12" height="3" fill="url(#tg)"/><path d="M2 4.500h2M5 4.500h2M8 4.500h2M2 6.500h2M5 6.500h2M8 6.500h2M2 8.500h2M5 8.500h2M8 8.500h2" stroke="#98a8d0"/><path d="M11.500 3v8.500h-11" stroke="#3a5a8c" fill="none"/><path d="M0.500 3v8" stroke="#dfe8ff"/></svg></div><div class="t" id="w1i6" style="left:163px;top:180px;">Должность</div><div class="a" style="left:137px;top:199px;line-height:0"><svg width="12" height="12" viewBox="0 0 12 12"><defs><linearGradient id="tg" x1="0" y1="0" x2="0" y2="1"><stop offset="0" stop-color="#a8c4ff"/><stop offset="1" stop-color="#3a72f0"/></linearGradient></defs><rect x="0" y="0" width="12" height="12" fill="#f4f8ff"/><rect x="0" y="0" width="12" height="3" fill="url(#tg)"/><path d="M2 4.500h2M5 4.500h2M8 4.500h2M2 6.500h2M5 6.500h2M8 6.500h2M2 8.500h2M5 8.500h2M8 8.500h2" stroke="#98a8d0"/><path d="M11.500 3v8.500h-11" stroke="#3a5a8c" fill="none"/><path d="M0.500 3v8" stroke="#dfe8ff"/></svg></div><div class="t" id="w1i7" style="left:163px;top:200px;">Клиенты</div><div class="a" style="left:137px;top:219px;line-height:0"><svg width="12" height="12" viewBox="0 0 12 12"><defs><linearGradient id="tg" x1="0" y1="0" x2="0" y2="1"><stop offset="0" stop-color="#a8c4ff"/><stop offset="1" stop-color="#3a72f0"/></linearGradient></defs><rect x="0" y="0" width="12" height="12" fill="#f4f8ff"/><rect x="0" y="0" width="12" height="3" fill="url(#tg)"/><path d="M2 4.500h2M5 4.500h2M8 4.500h2M2 6.500h2M5 6.500h2M8 6.500h2M2 8.500h2M5 8.500h2M8 8.500h2" stroke="#98a8d0"/><path d="M11.500 3v8.500h-11" stroke="#3a5a8c" fill="none"/><path d="M0.500 3v8" stroke="#dfe8ff"/></svg></div><div class="t" id="w1i8" style="left:163px;top:220px;">Маршруты грузоперевозок</div><div class="a" style="left:137px;top:239px;line-height:0"><svg width="12" height="12" viewBox="0 0 12 12"><defs><linearGradient id="tg" x1="0" y1="0" x2="0" y2="1"><stop offset="0" stop-color="#a8c4ff"/><stop offset="1" stop-color="#3a72f0"/></linearGradient></defs><rect x="0" y="0" width="12" height="12" fill="#f4f8ff"/><rect x="0" y="0" width="12" height="3" fill="url(#tg)"/><path d="M2 4.500h2M5 4.500h2M8 4.500h2M2 6.500h2M5 6.500h2M8 6.500h2M2 8.500h2M5 8.500h2M8 8.500h2" stroke="#98a8d0"/><path d="M11.500 3v8.500h-11" stroke="#3a5a8c" fill="none"/><path d="M0.500 3v8" stroke="#dfe8ff"/></svg></div><div class="a" style="left:161px;top:238px;width:63px;height:17px;background:#C6C3C6"></div><div class="t" id="w1i9" style="left:163px;top:240px;">Нормативы</div><div class="a" style="left:137px;top:259px;line-height:0"><svg width="12" height="12" viewBox="0 0 12 12"><defs><linearGradient id="tg" x1="0" y1="0" x2="0" y2="1"><stop offset="0" stop-color="#a8c4ff"/><stop offset="1" stop-color="#3a72f0"/></linearGradient></defs><rect x="0" y="0" width="12" height="12" fill="#f4f8ff"/><rect x="0" y="0" width="12" height="3" fill="url(#tg)"/><path d="M2 4.500h2M5 4.500h2M8 4.500h2M2 6.500h2M5 6.500h2M8 6.500h2M2 8.500h2M5 8.500h2M8 8.500h2" stroke="#98a8d0"/><path d="M11.500 3v8.500h-11" stroke="#3a5a8c" fill="none"/><path d="M0.500 3v8" stroke="#dfe8ff"/></svg></div><div class="t" id="w1i10" style="left:163px;top:260px;">Пассажироперевозки</div><div class="a" style="left:137px;top:279px;line-height:0"><svg width="12" height="12" viewBox="0 0 12 12"><defs><linearGradient id="tg" x1="0" y1="0" x2="0" y2="1"><stop offset="0" stop-color="#a8c4ff"/><stop offset="1" stop-color="#3a72f0"/></linearGradient></defs><rect x="0" y="0" width="12" height="12" fill="#f4f8ff"/><rect x="0" y="0" width="12" height="3" fill="url(#tg)"/><path d="M2 4.500h2M5 4.500h2M8 4.500h2M2 6.500h2M5 6.500h2M8 6.500h2M2 8.500h2M5 8.500h2M8 8.500h2" stroke="#98a8d0"/><path d="M11.500 3v8.500h-11" stroke="#3a5a8c" fill="none"/><path d="M0.500 3v8" stroke="#dfe8ff"/></svg></div><div class="t" id="w1i11" style="left:163px;top:280px;">Пассажирские маршруты</div><div class="a" style="left:137px;top:299px;line-height:0"><svg width="12" height="12" viewBox="0 0 12 12"><defs><linearGradient id="tg" x1="0" y1="0" x2="0" y2="1"><stop offset="0" stop-color="#a8c4ff"/><stop offset="1" stop-color="#3a72f0"/></linearGradient></defs><rect x="0" y="0" width="12" height="12" fill="#f4f8ff"/><rect x="0" y="0" width="12" height="3" fill="url(#tg)"/><path d="M2 4.500h2M5 4.500h2M8 4.500h2M2 6.500h2M5 6.500h2M8 6.500h2M2 8.500h2M5 8.500h2M8 8.500h2" stroke="#98a8d0"/><path d="M11.500 3v8.500h-11" stroke="#3a5a8c" fill="none"/><path d="M0.500 3v8" stroke="#dfe8ff"/></svg></div><div class="t" id="w1i12" style="left:163px;top:300px;">Пункты</div><div class="a" style="left:137px;top:319px;line-height:0"><svg width="12" height="12" viewBox="0 0 12 12"><defs><linearGradient id="tg" x1="0" y1="0" x2="0" y2="1"><stop offset="0" stop-color="#a8c4ff"/><stop offset="1" stop-color="#3a72f0"/></linearGradient></defs><rect x="0" y="0" width="12" height="12" fill="#f4f8ff"/><rect x="0" y="0" width="12" height="3" fill="url(#tg)"/><path d="M2 4.500h2M5 4.500h2M8 4.500h2M2 6.500h2M5 6.500h2M8 6.500h2M2 8.500h2M5 8.500h2M8 8.500h2" stroke="#98a8d0"/><path d="M11.500 3v8.500h-11" stroke="#3a5a8c" fill="none"/><path d="M0.500 3v8" stroke="#dfe8ff"/></svg></div><div class="t" id="w1i13" style="left:163px;top:320px;">Ремонт</div><div class="a" style="left:137px;top:339px;line-height:0"><svg width="12" height="12" viewBox="0 0 12 12"><defs><linearGradient id="tg" x1="0" y1="0" x2="0" y2="1"><stop offset="0" stop-color="#a8c4ff"/><stop offset="1" stop-color="#3a72f0"/></linearGradient></defs><rect x="0" y="0" width="12" height="12" fill="#f4f8ff"/><rect x="0" y="0" width="12" height="3" fill="url(#tg)"/><path d="M2 4.500h2M5 4.500h2M8 4.500h2M2 6.500h2M5 6.500h2M8 6.500h2M2 8.500h2M5 8.500h2M8 8.500h2" stroke="#98a8d0"/><path d="M11.500 3v8.500h-11" stroke="#3a5a8c" fill="none"/><path d="M0.500 3v8" stroke="#dfe8ff"/></svg></div><div class="t" id="w1i14" style="left:163px;top:340px;">Ремонтные работы</div><div class="a" style="left:137px;top:359px;line-height:0"><svg width="12" height="12" viewBox="0 0 12 12"><defs><linearGradient id="tg" x1="0" y1="0" x2="0" y2="1"><stop offset="0" stop-color="#a8c4ff"/><stop offset="1" stop-color="#3a72f0"/></linearGradient></defs><rect x="0" y="0" width="12" height="12" fill="#f4f8ff"/><rect x="0" y="0" width="12" height="3" fill="url(#tg)"/><path d="M2 4.500h2M5 4.500h2M8 4.500h2M2 6.500h2M5 6.500h2M8 6.500h2M2 8.500h2M5 8.500h2M8 8.500h2" stroke="#98a8d0"/><path d="M11.500 3v8.500h-11" stroke="#3a5a8c" fill="none"/><path d="M0.500 3v8" stroke="#dfe8ff"/></svg></div><div class="t" id="w1i15" style="left:163px;top:360px;">Списочный состав</div></div>
<div class="win" style="left:532px;top:124px;width:663px;height:375px"><div class="in"></div><div class="tb" style="background:#000084;color:#fff"><div class="a" style="left:4px;top:3px;line-height:0"><svg width="12" height="12" viewBox="0 0 12 12"><defs><linearGradient id="tg" x1="0" y1="0" x2="0" y2="1"><stop offset="0" stop-color="#a8c4ff"/><stop offset="1" stop-color="#3a72f0"/></linearGradient></defs><rect x="0" y="0" width="12" height="12" fill="#f4f8ff"/><rect x="0" y="0" width="12" height="3" fill="url(#tg)"/><path d="M2 4.500h2M5 4.500h2M8 4.500h2M2 6.500h2M5 6.500h2M8 6.500h2M2 8.500h2M5 8.500h2M8 8.500h2" stroke="#98a8d0"/><path d="M11.500 3v8.500h-11" stroke="#3a5a8c" fill="none"/><path d="M0.500 3v8" stroke="#dfe8ff"/></svg></div><div class="t" id="at" style="left:20px;top:2px;font-size:12px;line-height:14px;letter-spacing:0">Маршруты грузоперевозок : таблица</div><div class="cb" style="right:36px"><svg class="a" style="left:0;top:0" width="14" height="12"><rect x="3" y="8" width="6" height="2" fill="#000"/></svg></div><div class="cb" style="right:20px"><svg class="a" style="left:0;top:0" width="14" height="12"><rect x="2.5" y="1.5" width="8" height="8" fill="none" stroke="#000"/><rect x="2" y="1" width="9" height="2" fill="#000"/></svg></div><div class="cb" style="right:2px"><svg class="a" style="left:0;top:0" width="14" height="12"><path transform="translate(3 2)" d="M0 0h2v1h1v1h2v-1h1v-1h2v1h-1v1h-1v1h-1v1h1v1h1v1h1v1h-2v-1h-1v-1h-2v1h-1v1h-2v-1h1v-1h1v-1h1v-1h-1v-1h-1v-1h-1z" fill="#000"/></svg></div></div><div class="a" style="left:3px;top:22px;width:655px;height:348px"><div class="a" style="left:0;top:0;width:639px;height:81px;background:#fff;overflow:hidden"><div class="a" style="left:0;top:0;width:639px;height:14px;background:#C6C3C6;border-top:1px solid #fff;border-bottom:1px solid #000"></div><div class="a" style="left:16px;top:0;width:1px;height:14px;background:#000"></div><div class="a" style="left:17px;top:1px;width:1px;height:12px;background:#fff"></div><div class="a" style="left:160px;top:0;width:1px;height:14px;background:#000"></div><div class="a" style="left:161px;top:1px;width:1px;height:12px;background:#fff"></div><div class="a" style="left:256px;top:0;width:1px;height:14px;background:#000"></div><div class="a" style="left:257px;top:1px;width:1px;height:12px;background:#fff"></div><div class="t g" id="ah1" style="left:17px;width:143px;top:1px;text-align:center">Имя поля</div><div class="t g" id="ah2" style="left:161px;width:95px;top:1px;text-align:center">Тип данных</div><div class="t g" id="ah3" style="left:257px;width:382px;top:1px;text-align:center">Описание</div><div class="a" style="left:0;top:14px;width:16px;height:14px;background:#C6C3C6;border-top:1px solid #fff;border-left:1px solid #fff;border-bottom:1px solid #000"></div><div class="a" style="left:17px;top:27px;width:622px;height:1px;background:#C6C3C6"></div><div class="a" style="left:0;top:28px;width:16px;height:14px;background:#C6C3C6;border-top:1px solid #fff;border-left:1px solid #fff;border-bottom:1px solid #000"></div><div class="a" style="left:17px;top:41px;width:622px;height:1px;background:#C6C3C6"></div><div class="a" style="left:0;top:42px;width:16px;height:14px;background:#C6C3C6;border-top:1px solid #fff;border-left:1px solid #fff;border-bottom:1px solid #000"></div><div class="a" style="left:17px;top:55px;width:622px;height:1px;background:#C6C3C6"></div><div class="a" style="left:0;top:56px;width:16px;height:14px;background:#C6C3C6;border-top:1px solid #fff;border-left:1px solid #fff;border-bottom:1px solid #000"></div><div class="a" style="left:17px;top:69px;width:622px;height:1px;background:#C6C3C6"></div><div class="a" style="left:0;top:70px;width:16px;height:14px;background:#C6C3C6;border-top:1px solid #fff;border-left:1px solid #fff;border-bottom:1px solid #000"></div><div class="a" style="left:17px;top:83px;width:622px;height:1px;background:#C6C3C6"></div><div class="a" style="left:16px;top:14px;width:1px;height:67px;background:#000"></div><div class="a" style="left:160px;top:14px;width:1px;height:67px;background:#C6C3C6"></div><div class="a" style="left:256px;top:14px;width:1px;height:67px;background:#C6C3C6"></div><div class="a" style="left:1px;top:15px;line-height:0"><svg width="15" height="12" viewBox="0 0 15 12" shape-rendering="crispEdges"><path d="M3 0h5v1h-5zM2 1h1v3h-1zM8 1h1v3h-1zM5 2h1v1h-1zM3 4h1v1h-1zM7 4h1v1h-1zM4 5h1v5h-1zM6 5h1v1h-1zM7 6h1v1h-1zM6 7h1v1h-1zM7 8h1v1h-1zM6 9h1v1h-1zM5 10h1v1h-1zM11 2h1v7h-1zM12 3h1v5h-1zM13 4h1v3h-1zM14 5h1v1h-1z" fill="#000"/></svg></div><div class="t g" style="left:20px;top:15px">К</div><div class="a" style="left:22px;top:14px;width:70px;height:13px;background:#000"></div><div class="t g" id="ar0" style="left:22px;top:14px;width:70px;height:13px;overflow:hidden;color:#fff"><span class="a" style="left:-2px;top:1px">КодМаршрута</span></div><div class="t g" id="ad0" style="left:163px;top:15px">Числовой</div><div class="t g" id="ar1" style="left:20px;top:29px">ПунктОтправки</div><div class="t g" id="ad1" style="left:163px;top:29px">Текстовый</div><div class="t g" id="ar2" style="left:20px;top:43px">ПунктНазначения</div><div class="t g" id="ad2" style="left:163px;top:43px">Текстовый</div><div class="t g" id="ar3" style="left:20px;top:57px">Растояние</div><div class="t g" id="ad3" style="left:163px;top:57px">Числовой</div></div><div class="a" style="left:639px;top:0;width:16px;height:81px;background-color:#fff;background-image:linear-gradient(45deg,#C6C3C6 25%,transparent 25%,transparent 75%,#C6C3C6 75%),linear-gradient(45deg,#C6C3C6 25%,transparent 25%,transparent 75%,#C6C3C6 75%);background-size:2px 2px;background-position:0 0,1px 1px"></div><div class="btn" style="left:639px;top:0;width:16px;height:16px"><svg class="a" style="left:3px;top:5px" width="7" height="4"><path d="M0 4h7l-3.500-4z" fill="#000"/></svg></div><div class="btn" style="left:639px;top:16px;width:16px;height:16px"></div><div class="btn" style="left:639px;top:65px;width:16px;height:16px"><svg class="a" style="left:3px;top:5px" width="7" height="4"><path d="M0 0h7l-3.500 4z" fill="#000"/></svg></div><div class="t g" id="afp" style="left:0;width:655px;top:83px;text-align:center">Свойства поля</div><div class="a" style="left:0;top:96px;width:655px;height:1px;background:#848284"></div><div class="a" style="left:0;top:97px;width:655px;height:1px;background:#fff"></div><div class="a" style="left:7px;top:125px;width:435px;height:216px;border:1px solid;border-color:#fff #000 #000 #fff"><div class="a" style="left:0;top:0;right:0;bottom:0;border:1px solid;border-color:#C6C3C6 #848284 #848284 #C6C3C6"></div></div><div class="a" style="left:95px;top:108px;width:84px;height:17px;border:1px solid;border-color:#fff #000 transparent #fff;border-radius:2px 2px 0 0"><div class="a" style="left:0;top:0;right:0;bottom:-1px;border-right:1px solid #848284"></div></div><div class="t g" id="atab2" style="left:96px;width:80px;top:111px;text-align:center">Подстановка</div><div class="a" style="left:7px;top:105px;width:89px;height:22px;background:#C6C3C6;border:1px solid;border-color:#fff #000 transparent #fff;border-radius:3px 3px 0 0"><div class="a" style="left:0;top:0;right:0;bottom:0;border-right:1px solid #848284"></div></div><div class="t g" id="atab1" style="left:8px;width:86px;top:109px;text-align:center">Общие</div><div class="a" style="left:157px;top:127px;width:261px;height:13px;background:#fff"></div><div class="t g" id="ap0" style="left:14px;top:128px">Размер поля</div><div class="t g" id="av0" style="left:158px;top:128px">Длинное целое</div><div class="a" style="left:157px;top:142px;width:261px;height:13px;background:#fff"></div><div class="t g" id="ap1" style="left:14px;top:143px">Формат поля</div><div class="a" style="left:157px;top:157px;width:261px;height:13px;background:#fff"></div><div class="t g" id="ap2" style="left:14px;top:158px">Число десятичных знаков</div><div class="t g" id="av2" style="left:158px;top:158px">Авто</div><div class="a" style="left:157px;top:172px;width:261px;height:13px;background:#fff"></div><div class="t g" id="ap3" style="left:14px;top:173px">Маска ввода</div><div class="a" style="left:157px;top:187px;width:261px;height:13px;background:#fff"></div><div class="t g" id="ap4" style="left:14px;top:188px">Подпись</div><div class="a" style="left:157px;top:202px;width:261px;height:13px;background:#fff"></div><div class="t g" id="ap5" style="left:14px;top:203px">Значение по умолчанию</div><div class="t g" id="av5" style="left:158px;top:203px">0</div><div class="a" style="left:157px;top:217px;width:261px;height:13px;background:#fff"></div><div class="t g" id="ap6" style="left:14px;top:218px">Условие на значение</div><div class="a" style="left:157px;top:232px;width:261px;height:13px;background:#fff"></div><div class="t g" id="ap7" style="left:14px;top:233px">Сообщение об ошибке</div><div class="a" style="left:157px;top:247px;width:261px;height:13px;background:#fff"></div><div class="t g" id="ap8" style="left:14px;top:248px">Обязательное поле</div><div class="t g" id="av8" style="left:158px;top:248px">Нет</div><div class="a" style="left:157px;top:262px;width:261px;height:13px;background:#fff"></div><div class="t g" id="ap9" style="left:14px;top:263px">Индексированное поле</div><div class="t g" id="av9" style="left:158px;top:263px">Да (Совпадения не допускаются)</div><div class="a" style="left:157px;top:277px;width:261px;height:13px;background:#fff"></div><div class="t g" id="ap10" style="left:14px;top:278px">Смарт-теги</div><div class="a sunk" style="left:449px;top:105px;width:193px;height:236px"></div><div class="t g" id="ahl0" style="left:442px;width:200px;top:198px;text-align:center;color:#0000FF">Имя поля может состоять из 64</div><div class="t g" id="ahl1" style="left:442px;width:200px;top:211px;text-align:center;color:#0000FF">знаков с учетом пробелов.&nbsp; Для</div><div class="t g" id="ahl2" style="left:442px;width:200px;top:224px;text-align:center;color:#0000FF">справки по именам полей нажмите</div><div class="t g" id="ahl3" style="left:442px;width:200px;top:237px;text-align:center;color:#0000FF">клавишу F1.</div></div></div>
<div class="win" style="left:538px;top:505px;width:659px;height:405px"><div class="in"></div><div class="tb" style="background:#848284;color:#C6C3C6"><div class="a" style="left:4px;top:3px;line-height:0"><svg width="12" height="12" viewBox="0 0 12 12"><defs><linearGradient id="tg" x1="0" y1="0" x2="0" y2="1"><stop offset="0" stop-color="#a8c4ff"/><stop offset="1" stop-color="#3a72f0"/></linearGradient></defs><rect x="0" y="0" width="12" height="12" fill="#f4f8ff"/><rect x="0" y="0" width="12" height="3" fill="url(#tg)"/><path d="M2 4.500h2M5 4.500h2M8 4.500h2M2 6.500h2M5 6.500h2M8 6.500h2M2 8.500h2M5 8.500h2M8 8.500h2" stroke="#98a8d0"/><path d="M11.500 3v8.500h-11" stroke="#3a5a8c" fill="none"/><path d="M0.500 3v8" stroke="#dfe8ff"/></svg></div><div class="t" id="bt" style="left:20px;top:2px;font-size:12px;line-height:14px;letter-spacing:0">Нормативы : таблица</div><div class="cb" style="right:36px"><svg class="a" style="left:0;top:0" width="14" height="12"><rect x="3" y="8" width="6" height="2" fill="#000"/></svg></div><div class="cb" style="right:20px"><svg class="a" style="left:0;top:0" width="14" height="12"><rect x="2.5" y="1.5" width="8" height="8" fill="none" stroke="#000"/><rect x="2" y="1" width="9" height="2" fill="#000"/></svg></div><div class="cb" style="right:2px"><svg class="a" style="left:0;top:0" width="14" height="12"><path transform="translate(3 2)" d="M0 0h2v1h1v1h2v-1h1v-1h2v1h-1v1h-1v1h-1v1h1v1h1v1h1v1h-2v-1h-1v-1h-2v1h-1v1h-2v-1h1v-1h1v-1h1v-1h-1v-1h-1v-1h-1z" fill="#000"/></svg></div></div><div class="a" style="left:3px;top:22px;width:651px;height:378px"><div class="a" style="left:0;top:0;width:635px;height:111px;background:#fff;overflow:hidden"><div class="a" style="left:0;top:0;width:635px;height:14px;background:#C6C3C6;border-top:1px solid #fff;border-bottom:1px solid #000"></div><div class="a" style="left:16px;top:0;width:1px;height:14px;background:#000"></div><div class="a" style="left:17px;top:1px;width:1px;height:12px;background:#fff"></div><div class="a" style="left:160px;top:0;width:1px;height:14px;background:#000"></div><div class="a" style="left:161px;top:1px;width:1px;height:12px;background:#fff"></div><div class="a" style="left:256px;top:0;width:1px;height:14px;background:#000"></div><div class="a" style="left:257px;top:1px;width:1px;height:12px;background:#fff"></div><div class="t g" id="bh1" style="left:17px;width:143px;top:1px;text-align:center">Имя поля</div><div class="t g" id="bh2" style="left:161px;width:95px;top:1px;text-align:center">Тип данных</div><div class="t g" id="bh3" style="left:257px;width:378px;top:1px;text-align:center">Описание</div><div class="a" style="left:0;top:14px;width:16px;height:14px;background:#C6C3C6;border-top:1px solid #fff;border-left:1px solid #fff;border-bottom:1px solid #000"></div><div class="a" style="left:17px;top:27px;width:618px;height:1px;background:#C6C3C6"></div><div class="a" style="left:0;top:28px;width:16px;height:14px;background:#C6C3C6;border-top:1px solid #fff;border-left:1px solid #fff;border-bottom:1px solid #000"></div><div class="a" style="left:17px;top:41px;width:618px;height:1px;background:#C6C3C6"></div><div class="a" style="left:0;top:42px;width:16px;height:14px;background:#C6C3C6;border-top:1px solid #fff;border-left:1px solid #fff;border-bottom:1px solid #000"></div><div class="a" style="left:17px;top:55px;width:618px;height:1px;background:#C6C3C6"></div><div class="a" style="left:0;top:56px;width:16px;height:14px;background:#C6C3C6;border-top:1px solid #fff;border-left:1px solid #fff;border-bottom:1px solid #000"></div><div class="a" style="left:17px;top:69px;width:618px;height:1px;background:#C6C3C6"></div><div class="a" style="left:0;top:70px;width:16px;height:14px;background:#C6C3C6;border-top:1px solid #fff;border-left:1px solid #fff;border-bottom:1px solid #000"></div><div class="a" style="left:17px;top:83px;width:618px;height:1px;background:#C6C3C6"></div><div class="a" style="left:0;top:84px;width:16px;height:14px;background:#C6C3C6;border-top:1px solid #fff;border-left:1px solid #fff;border-bottom:1px solid #000"></div><div class="a" style="left:17px;top:97px;width:618px;height:1px;background:#C6C3C6"></div><div class="a" style="left:0;top:98px;width:16px;height:14px;background:#C6C3C6;border-top:1px solid #fff;border-left:1px solid #fff;border-bottom:1px solid #000"></div><div class="a" style="left:17px;top:111px;width:618px;height:1px;background:#C6C3C6"></div><div class="a" style="left:16px;top:14px;width:1px;height:97px;background:#000"></div><div class="a" style="left:160px;top:14px;width:1px;height:97px;background:#C6C3C6"></div><div class="a" style="left:256px;top:14px;width:1px;height:97px;background:#C6C3C6"></div><div class="a" style="left:1px;top:15px;line-height:0"><svg width="15" height="12" viewBox="0 0 15 12" shape-rendering="crispEdges"><path d="M3 0h5v1h-5zM2 1h1v3h-1zM8 1h1v3h-1zM5 2h1v1h-1zM3 4h1v1h-1zM7 4h1v1h-1zM4 5h1v5h-1zM6 5h1v1h-1zM7 6h1v1h-1zM6 7h1v1h-1zM7 8h1v1h-1zM6 9h1v1h-1zM5 10h1v1h-1zM11 2h1v7h-1zM12 3h1v5h-1zM13 4h1v3h-1zM14 5h1v1h-1z" fill="#000"/></svg></div><div class="t g" id="br0" style="left:20px;top:15px">Код нормы</div><div class="t g" id="bd0" style="left:163px;top:15px">Числовой</div><div class="t g" id="br1" style="left:20px;top:29px">Вид груза</div><div class="t g" id="bd1" style="left:163px;top:29px">Текстовый</div><div class="t g" id="br2" style="left:20px;top:43px">Время погрузки 1т_ч</div><div class="t g" id="bd2" style="left:163px;top:43px">Числовой</div><div class="t g" id="br3" style="left:20px;top:57px">Время выгрузки 1т _ч</div><div class="t g" id="bd3" style="left:163px;top:57px">Числовой</div></div><div class="a" style="left:635px;top:0;width:16px;height:111px;background-color:#fff;background-image:linear-gradient(45deg,#C6C3C6 25%,transparent 25%,transparent 75%,#C6C3C6 75%),linear-gradient(45deg,#C6C3C6 25%,transparent 25%,transparent 75%,#C6C3C6 75%);background-size:2px 2px;background-position:0 0,1px 1px"></div><div class="btn" style="left:635px;top:0;width:16px;height:16px"><svg class="a" style="left:3px;top:5px" width="7" height="4"><path d="M0 4h7l-3.500-4z" fill="#000"/></svg></div><div class="btn" style="left:635px;top:16px;width:16px;height:16px"></div><div class="btn" style="left:635px;top:95px;width:16px;height:16px"><svg class="a" style="left:3px;top:5px" width="7" height="4"><path d="M0 0h7l-3.500 4z" fill="#000"/></svg></div><div class="t g" id="bfp" style="left:0;width:651px;top:113px;text-align:center">Свойства поля</div><div class="a" style="left:0;top:126px;width:651px;height:1px;background:#848284"></div><div class="a" style="left:0;top:127px;width:651px;height:1px;background:#fff"></div><div class="a" style="left:7px;top:155px;width:435px;height:216px;border:1px solid;border-color:#fff #000 #000 #fff"><div class="a" style="left:0;top:0;right:0;bottom:0;border:1px solid;border-color:#C6C3C6 #848284 #848284 #C6C3C6"></div></div><div class="a" style="left:95px;top:138px;width:84px;height:17px;border:1px solid;border-color:#fff #000 transparent #fff;border-radius:2px 2px 0 0"><div class="a" style="left:0;top:0;right:0;bottom:-1px;border-right:1px solid #848284"></div></div><div class="t g" id="btab2" style="left:96px;width:80px;top:141px;text-align:center">Подстановка</div><div class="a" style="left:7px;top:135px;width:89px;height:22px;background:#C6C3C6;border:1px solid;border-color:#fff #000 transparent #fff;border-radius:3px 3px 0 0"><div class="a" style="left:0;top:0;right:0;bottom:0;border-right:1px solid #848284"></div></div><div class="t g" id="btab1" style="left:8px;width:86px;top:139px;text-align:center">Общие</div><div class="a" style="left:157px;top:157px;width:261px;height:13px;background:#fff"></div><div class="t g" id="bp0" style="left:14px;top:158px">Размер поля</div><div class="t g" id="bv0" style="left:158px;top:158px">Длинное целое</div><div class="a" style="left:157px;top:172px;width:261px;height:13px;background:#fff"></div><div class="t g" id="bp1" style="left:14px;top:173px">Формат поля</div><div class="a" style="left:157px;top:187px;width:261px;height:13px;background:#fff"></div><div class="t g" id="bp2" style="left:14px;top:188px">Число десятичных знаков</div><div class="t g" id="bv2" style="left:158px;top:188px">Авто</div><div class="a" style="left:157px;top:202px;width:261px;height:13px;background:#fff"></div><div class="t g" id="bp3" style="left:14px;top:203px">Маска ввода</div><div class="a" style="left:157px;top:217px;width:261px;height:13px;background:#fff"></div><div class="t g" id="bp4" style="left:14px;top:218px">Подпись</div><div class="a" style="left:157px;top:232px;width:261px;height:13px;background:#fff"></div><div class="t g" id="bp5" style="left:14px;top:233px">Значение по умолчанию</div><div class="t g" id="bv5" style="left:158px;top:233px">0</div><div class="a" style="left:157px;top:247px;width:261px;height:13px;background:#fff"></div><div class="t g" id="bp6" style="left:14px;top:248px">Условие на значение</div><div class="a" style="left:157px;top:262px;width:261px;height:13px;background:#fff"></div><div class="t g" id="bp7" style="left:14px;top:263px">Сообщение об ошибке</div><div class="a" style="left:157px;top:277px;width:261px;height:13px;background:#fff"></div><div class="t g" id="bp8" style="left:14px;top:278px">Обязательное поле</div><div class="t g" id="bv8" style="left:158px;top:278px">Нет</div><div class="a" style="left:157px;top:292px;width:261px;height:13px;background:#fff"></div><div class="t g" id="bp9" style="left:14px;top:293px">Индексированное поле</div><div class="t g" id="bv9" style="left:158px;top:293px">Да (Совпадения не допускаются)</div><div class="a" style="left:157px;top:307px;width:261px;height:13px;background:#fff"></div><div class="t g" id="bp10" style="left:14px;top:308px">Смарт-теги</div><div class="a sunk" style="left:449px;top:135px;width:189px;height:236px"></div><div class="t g" id="bhl0" style="left:442px;width:200px;top:228px;text-align:center;color:#0000FF">Имя поля может состоять из 64</div><div class="t g" id="bhl1" style="left:442px;width:200px;top:241px;text-align:center;color:#0000FF">знаков с учетом пробелов.&nbsp; Для</div><div class="t g" id="bhl2" style="left:442px;width:200px;top:254px;text-align:center;color:#0000FF">справки по именам полей нажмите</div><div class="t g" id="bhl3" style="left:442px;width:200px;top:267px;text-align:center;color:#0000FF">клавишу F1.</div></div></div>
<div class="a" style="left:0;top:974px;width:1280px;height:22px;background:#C6C3C6;border-top:1px solid #fff"></div>
<div class="a" style="left:9px;top:977px;width:976px;height:17px;border:1px solid #D6D3D6"></div>
<div class="a" style="left:1003px;top:977px;width:37px;height:17px;border:1px solid #D6D3D6"></div>
<div class="a" style="left:1043px;top:977px;width:27px;height:17px;border:1px solid #D6D3D6"></div>
<div class="a" style="left:1073px;top:977px;width:28px;height:17px;border:1px solid #D6D3D6"></div>
<div class="a" style="left:1104px;top:977px;width:32px;height:17px;border:1px solid #D6D3D6"></div>
<div class="a" style="left:1139px;top:977px;width:33px;height:17px;border:1px solid #D6D3D6"></div>
<div class="a" style="left:1175px;top:977px;width:29px;height:17px;border:1px solid #D6D3D6"></div>
<div class="a" style="left:1207px;top:977px;width:32px;height:17px;border:1px solid #D6D3D6"></div>
<div class="a" style="left:1242px;top:977px;width:30px;height:17px;border:1px solid #D6D3D6"></div>
<div class="t" id="stt" style="left:12px;top:979px">Конструктор.&nbsp; F6 = переключение окон.&nbsp; F1 = справка.</div>
<div class="t" id="num" style="left:1177px;top:979px">NUM</div>
<div class="t" id="zm" style="left:1245px;top:979px">ЗМЩ</div>
<div class="a" style="left:0;top:995px;width:1280px;height:29px;background:#C6C3C6;border-top:1px solid #fff"></div>
<div class="btn" style="left:2px;top:998px;width:52px;height:22px"></div>
<svg class="a" style="left:5px;top:1001px" width="16" height="16" viewBox="0 0 16 16"><path d="M1 3c2-1.500 4-1.500 6 0v5c-2-1.500-4-1.500-6 0z" fill="#e8492a"/><path d="M8 3.500c2 1.500 4 1.500 6 0v5c-2 1.500-4 1.500-6 0z" fill="#6cc044"/><path d="M1 9c2-1.500 4-1.500 6 0v5c-2-1.500-4-1.500-6 0z" fill="#3a7ae0"/><path d="M8 9.500c2 1.500 4 1.500 6 0v5c-2 1.500-4 1.500-6 0z" fill="#f4c820"/></svg>
<div class="t" id="start" style="left:23px;top:1002px;letter-spacing:.2px;font-weight:bold;font-size:12px;line-height:14px">Пуск</div>
<div class="a" style="left:61px;top:1000px;width:1px;height:19px;background:#fff"></div><div class="a" style="left:63px;top:1000px;width:1px;height:19px;background:#848284"></div>
<div class="a" style="left:97px;top:1000px;width:1px;height:19px;background:#fff"></div><div class="a" style="left:99px;top:1000px;width:1px;height:19px;background:#848284"></div>
<svg class="a" style="left:72px;top:1001px" width="17" height="17" viewBox="0 0 17 17"><circle cx="8.500" cy="9.500" r="5" fill="none" stroke="#2a8ae8" stroke-width="3.200"/><rect x="4" y="8.300" width="10" height="2.400" fill="#2a8ae8"/><rect x="9.500" y="10.700" width="6" height="2.300" fill="#C6C3C6"/><path d="M1.500 14.500c-2-3 3-10 9-12.500c3-1 5 0 5 2" fill="none" stroke="#f0b020" stroke-width="1.400"/></svg>
<div class="btn" style="left:104px;top:998px;width:142px;height:22px"></div>
<div class="a" style="left:108px;top:1001px;line-height:0"><svg width="16" height="15" viewBox="0 0 16 15"><path d="M0.500 3.500c0-1 .5-1.500 1.500-1.500h4l1.500 1.500h6c1 0 1.500.5 1.500 1.500v7c0 1-.5 1.500-1.500 1.500h-11.500c-1 0-1.500-.5-1.500-1.500z" fill="#f4d870" stroke="#a08428"/><path d="M1 6h14" stroke="#fff0a8"/></svg></div>
<div class="t" id="tk0" style="left:128px;top:1003px">C:\Documents and S...</div>
<div class="btn" style="left:249px;top:998px;width:142px;height:22px"></div>
<div class="a" style="left:253px;top:1001px;line-height:0"><svg width="16" height="16" viewBox="0 0 16 16"><path d="M3.500 0.500h8l3 3v12h-11z" fill="#fff" stroke="#5a7ac0"/><rect x="0.500" y="3.500" width="10" height="8" fill="#3a5ab8" stroke="#1a3a8c"/><path d="M2 5l1.500 5l1.700-4l1.700 4l1.600-5" stroke="#fff" stroke-width="1.200" fill="none"/></svg></div>
<div class="t" id="tk1" style="left:273px;top:1003px">Rehcjdfz.doc - Micros...</div>
<div class="btn" style="left:394px;top:998px;width:142px;height:22px"></div>
<div class="a" style="left:398px;top:1001px;line-height:0"><svg width="17" height="17" viewBox="0 0 17 17"><rect x="2.500" y="0.500" width="10" height="8" fill="#c4d4f4" stroke="#6a8ad8"/><rect x="3" y="1" width="9" height="2" fill="#5a8af0"/><rect x="0.500" y="5.500" width="9" height="10" fill="#fff" stroke="#7a96d8"/><rect x="1" y="6" width="8" height="2" fill="#6a94ec"/><path d="M2 10.500h3M2 12.500h3" stroke="#5a78c0"/><rect x="5.500" y="3.500" width="10" height="10" fill="#fff" stroke="#4a6ac8"/><rect x="6" y="4" width="9" height="2.500" fill="#3a72ec"/><path d="M7 8.500h2M10 8.500h2M13 8.500h2M7 10.500h2M10 10.500h2M13 10.500h2" stroke="#7c94d0"/><path d="M16 5v9h-10" stroke="#2a4a8c" fill="none" stroke-width=".8"/></svg></div>
<div class="t" id="tk2" style="left:418px;top:1003px">Курсовая : база дан...</div>
<div class="btn" style="left:539px;top:998px;width:142px;height:22px"></div>
<div class="a" style="left:543px;top:1001px;line-height:0"><svg width="16" height="16" viewBox="0 0 16 16"><path d="M3.500 0.500h8l3 3v12h-11z" fill="#fff" stroke="#5a7ac0"/><rect x="0.500" y="3.500" width="10" height="8" fill="#3a5ab8" stroke="#1a3a8c"/><path d="M2 5l1.500 5l1.700-4l1.700 4l1.600-5" stroke="#fff" stroke-width="1.200" fill="none"/></svg></div>
<div class="t" id="tk3" style="left:563px;top:1003px">Моя курсовая по ИТ...</div>
<div class="a" style="left:684px;top:998px;width:142px;height:22px;background-color:#fff;background-image:linear-gradient(45deg,#C6C3C6 25%,transparent 25%,transparent 75%,#C6C3C6 75%),linear-gradient(45deg,#C6C3C6 25%,transparent 25%,transparent 75%,#C6C3C6 75%);background-size:2px 2px;background-position:0 0,1px 1px;border:1px solid;border-color:#000 #fff #fff #000"><div class="a" style="left:0;top:0;right:0;bottom:0;border:1px solid;border-color:#848284 #C6C3C6 #C6C3C6 #848284"></div></div>
<div class="a" style="left:691px;top:1004px;line-height:0"><svg width="12" height="12" viewBox="0 0 12 12"><defs><linearGradient id="tg" x1="0" y1="0" x2="0" y2="1"><stop offset="0" stop-color="#a8c4ff"/><stop offset="1" stop-color="#3a72f0"/></linearGradient></defs><rect x="0" y="0" width="12" height="12" fill="#f4f8ff"/><rect x="0" y="0" width="12" height="3" fill="url(#tg)"/><path d="M2 4.500h2M5 4.500h2M8 4.500h2M2 6.500h2M5 6.500h2M8 6.500h2M2 8.500h2M5 8.500h2M8 8.500h2" stroke="#98a8d0"/><path d="M11.500 3v8.500h-11" stroke="#3a5a8c" fill="none"/><path d="M0.500 3v8" stroke="#dfe8ff"/></svg></div>
<div class="t" id="tk4" style="left:709px;top:1004px;font-weight:bold;letter-spacing:.55px">Маршруты грузо...</div>
<div class="btn" style="left:829px;top:998px;width:142px;height:22px"></div>
<div class="a" style="left:835px;top:1003px;line-height:0"><svg width="12" height="12" viewBox="0 0 12 12"><defs><linearGradient id="tg" x1="0" y1="0" x2="0" y2="1"><stop offset="0" stop-color="#a8c4ff"/><stop offset="1" stop-color="#3a72f0"/></linearGradient></defs><rect x="0" y="0" width="12" height="12" fill="#f4f8ff"/><rect x="0" y="0" width="12" height="3" fill="url(#tg)"/><path d="M2 4.500h2M5 4.500h2M8 4.500h2M2 6.500h2M5 6.500h2M8 6.500h2M2 8.500h2M5 8.500h2M8 8.500h2" stroke="#98a8d0"/><path d="M11.500 3v8.500h-11" stroke="#3a5a8c" fill="none"/><path d="M0.500 3v8" stroke="#dfe8ff"/></svg></div>
<div class="t" id="tk5" style="left:853px;top:1003px">Нормативы : таблица</div>
<div class="a" style="left:982px;top:1000px;width:1px;height:19px;background:#fff"></div><div class="a" style="left:984px;top:1000px;width:1px;height:19px;background:#848284"></div>
<div class="a" style="left:992px;top:1002px;width:16px;height:16px;background:#000084"></div>
<div class="t" id="ru" style="left:993px;top:1003px;color:#fff;letter-spacing:-.6px">RU</div>
<div class="a" style="left:1012px;top:1000px;width:1px;height:19px;background:#fff"></div><div class="a" style="left:1014px;top:1000px;width:1px;height:19px;background:#848284"></div>
<div class="a" style="left:1172px;top:1000px;width:1px;height:19px;background:#fff"></div><div class="a" style="left:1174px;top:1000px;width:1px;height:19px;background:#848284"></div>
<div class="a sunk" style="left:1199px;top:998px;width:79px;height:24px"></div>
<svg class="a" style="left:1203px;top:1002px" width="14" height="16" viewBox="0 0 14 16"><path d="M7 0.500l6 2v5c0 4-3 6.500-6 8c-3-1.500-6-4-6-8v-5z" fill="#f4d020" stroke="#6a6a7a"/><rect x="6.200" y="3.500" width="1.700" height="6" fill="#202020"/><rect x="6.200" y="10.500" width="1.700" height="1.800" fill="#202020"/></svg>
<svg class="a" style="left:1220px;top:1002px" width="17" height="16" viewBox="0 0 17 16"><path d="M3 0.500h13v9c0 4-3 6-7 6h-8v-10c0-3 1-5 2-5z" fill="#e82020"/><circle cx="8" cy="8" r="5" fill="#fff"/><circle cx="8" cy="8" r="3" fill="#e85020"/><circle cx="8" cy="8" r="1.200" fill="#f8d060"/></svg>
<div class="t" id="clock" style="left:1243px;top:1003px">15:05</div>
</body></html>
